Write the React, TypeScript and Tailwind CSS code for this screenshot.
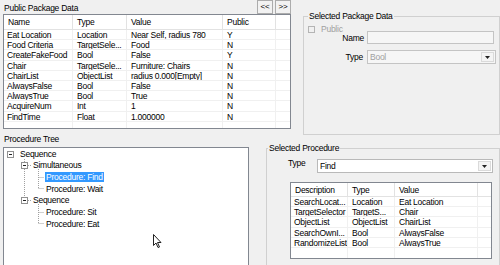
import React from 'react';

type Col = { title: string; w: string };

const pkgCols: Col[] = [
  { title: 'Name', w: 'w-[69px]' },
  { title: 'Type', w: 'w-[54px]' },
  { title: 'Value', w: 'w-[96px]' },
  { title: 'Public', w: 'w-[53px]' },
];

const pkgRows = [
  ['Eat Location', 'Location', 'Near Self, radius 780', 'Y'],
  ['Food Criteria', 'TargetSele...', 'Food', 'N'],
  ['CreateFakeFood', 'Bool', 'False', 'Y'],
  ['Chair', 'TargetSele...', 'Furniture: Chairs', 'N'],
  ['ChairList', 'ObjectList', 'radius 0.000[Empty]', 'N'],
  ['AlwaysFalse', 'Bool', 'False', 'N'],
  ['AlwaysTrue', 'Bool', 'True', 'N'],
  ['AcquireNum', 'Int', '1', 'N'],
  ['FindTime', 'Float', '1.000000', 'N'],
];

const procCols: Col[] = [
  { title: 'Description', w: 'w-[57px]' },
  { title: 'Type', w: 'w-[47px]' },
  { title: 'Value', w: 'w-[83px]' },
];

const procRows = [
  ['SearchLocat...', 'Location', 'Eat Location'],
  ['TargetSelector', 'TargetS...', 'Chair'],
  ['ObjectList', 'ObjectList', 'ChairList'],
  ['SearchOwnI...', 'Bool', 'AlwaysFalse'],
  ['RandomizeList', 'Bool', 'AlwaysTrue'],
];

const tree = [
  { t: 'Sequence', pl: 'pl-[15px]' },
  { t: 'Simultaneous', pl: 'pl-[28px]' },
  { t: 'Procedure: Find', pl: 'pl-[41px]', sel: true },
  { t: 'Procedure: Wait', pl: 'pl-[41px]' },
  { t: 'Sequence', pl: 'pl-[28px]' },
  { t: 'Procedure: Sit', pl: 'pl-[41px]' },
  { t: 'Procedure: Eat', pl: 'pl-[41px]' },
];

function ListView({ cols, rows, headH, className }: { cols: Col[]; rows: string[][]; headH: string; className: string }) {
  return (
    <div className={`flex flex-col overflow-hidden border border-[#828790] bg-white ${className}`}>
      <div className={`flex shrink-0 border-b border-[#e2e2e2] ${headH}`}>
        {cols.map((c, i) => (
          <div key={i} className={`${c.w} shrink-0 flex items-center overflow-hidden whitespace-nowrap border-r border-[#e2e2e2] pl-[4px]`}>
            {c.title}
          </div>
        ))}
        <div className="flex-1" />
      </div>
      {rows.map((r, ri) => (
        <div key={ri} className="flex h-[10.2px] shrink-0 border-b border-[#f0f0f0]">
          {r.map((v, ci) => (
            <div key={ci} className={`${cols[ci].w} shrink-0 overflow-hidden whitespace-nowrap border-r border-[#f0f0f0] leading-[10px] ${ci === 0 ? 'pl-[3px]' : 'pl-[4px]'}`}>
              {v}
            </div>
          ))}
          <div className="flex-1" />
        </div>
      ))}
      <div className="flex flex-1">
        {cols.map((c, i) => (
          <div key={i} className={`${c.w} shrink-0 border-r border-[#f0f0f0]`} />
        ))}
      </div>
    </div>
  );
}

function Arrow() {
  return (
    <div className="m-[1px] flex w-[13px] items-center justify-center self-stretch border border-[#dadada] bg-[#f4f4f4]">
      <svg width="5" height="3" viewBox="0 0 5 3">
        <polygon points="0,0 5,0 2.5,3" fill="#222" />
      </svg>
    </div>
  );
}

function Btn({ children }: { children: React.ReactNode }) {
  return (
    <div className="flex h-[14px] w-[16px] items-center justify-center border border-[#acacac] bg-[#f2f2f2] text-[8px] leading-[8px]">
      {children}
    </div>
  );
}

export default function App() {
  return (
    <div className="h-[265px] w-[500px] overflow-hidden bg-[#f0f0f0] font-['Liberation_Sans',Arial,sans-serif] text-[8.5px] leading-[10px] tracking-[-0.25px] text-black">
      <div className="flex h-[135px]">
        <div className="flex flex-col pl-[3px]">
          <div className="flex h-[14px] w-[288px] justify-between">
            <span className="pl-[1px] pt-[3px]">Public Package Data</span>
            <div className="flex gap-[2px]">
              <Btn>&lt;&lt;</Btn>
              <Btn>&gt;&gt;</Btn>
            </div>
          </div>
          <ListView cols={pkgCols} rows={pkgRows} headH="h-[15px]" className="h-[115px] w-[288px]" />
        </div>
        <fieldset className="ml-[12px] mt-[11px] h-[124px] w-[215px] border border-[#d0d0d0]">
          <legend className="ml-[4px] px-[1px] font-normal text-black">Selected Package Data</legend>
          <div className="mt-[3px] flex h-[10px] items-center pl-[4px]">
            <span className="h-[7px] w-[7px] border border-[#b4b4b4]" />
            <span className="ml-[6px] text-[#a0a0a0]">Public</span>
          </div>
          <div className="-mt-[3px] flex h-[13px] items-center">
            <span className="w-[60px] text-right">Name</span>
            <div className="ml-[3px] h-[13px] w-[127px] border border-[#c4c4c4] bg-[#f6f6f6]" />
          </div>
          <div className="mt-[6px] flex h-[14px] items-center">
            <span className="w-[59px] text-right">Type</span>
            <div className="ml-[4px] flex h-[14px] w-[129px] items-center border border-[#c4c4c4] bg-[#f6f6f6]">
              <span className="flex-1 pl-[2px] text-[#a0a0a0]">Bool</span>
              <Arrow />
            </div>
          </div>
        </fieldset>
      </div>
      <div className="flex">
        <div className="flex w-[249px] flex-col pl-[3px]">
          <div className="h-[12px] pl-[1px] leading-[9px]">Procedure Tree</div>
          <div className="relative h-[130px] w-[246px] border border-[#828790] bg-white">
            <svg className="pointer-events-none absolute left-0 top-0" width="244" height="128">
              <g stroke="#a0a0a0" strokeDasharray="1 1" fill="none">
                <line x1="20.5" y1="11" x2="20.5" y2="52" />
                <line x1="24" y1="17.5" x2="27" y2="17.5" />
                <line x1="24" y1="52.5" x2="27" y2="52.5" />
                <line x1="34.5" y1="21" x2="34.5" y2="40.5" />
                <line x1="34.5" y1="29.5" x2="40" y2="29.5" />
                <line x1="34.5" y1="40.5" x2="40" y2="40.5" />
                <line x1="34.5" y1="56" x2="34.5" y2="75.5" />
                <line x1="34.5" y1="64.5" x2="40" y2="64.5" />
                <line x1="34.5" y1="75.5" x2="40" y2="75.5" />
              </g>
              {[[3.5, 3.5], [17.5, 14.5], [17.5, 49.5]].map(([x, y], i) => (
                <g key={i}>
                  <rect x={x} y={y} width="6" height="6" fill="white" stroke="#919191" />
                  <line x1={x + 1.5} y1={y + 3} x2={x + 4.5} y2={y + 3} stroke="#222" />
                </g>
              ))}
            </svg>
            <div className="relative flex flex-col">
              {tree.map((n, i) => (
                <div key={i} className={`flex h-[11.67px] items-center ${n.pl}`}>
                  <span className={`px-[1px] leading-[10.5px] ${n.sel ? 'bg-[#3399ff] text-white' : ''}`}>{n.t}</span>
                </div>
              ))}
            </div>
            <svg className="absolute left-[149px] top-[86px]" width="10" height="15" viewBox="0 0 10 15">
              <polygon points="0.5,0.5 0.5,11.5 3,9 5,13.5 6.5,13 4.5,8.5 8,8.5" fill="white" stroke="#222" />
            </svg>
          </div>
        </div>
        <fieldset className="ml-[17px] mt-[8px] h-[140px] w-[240px] border border-[#d0d0d0]">
          <legend className="ml-[1px] px-[1px] font-normal text-black">Selected Procedure</legend>
          <div className="mt-[6px] flex h-[14px] items-start pl-[21px]">
            <span className="-mt-[1px] w-[29px] leading-[10px]">Type</span>
            <div className="flex h-[14px] w-[176px] items-center border border-[#b9b9b9] bg-white">
              <span className="flex-1 pl-[2px]">Find</span>
              <Arrow />
            </div>
          </div>
          <ListView cols={procCols} rows={procRows} headH="h-[14px]" className="ml-[23px] mt-[9px] h-[77px] w-[202px]" />
        </fieldset>
      </div>
    </div>
  );
}
